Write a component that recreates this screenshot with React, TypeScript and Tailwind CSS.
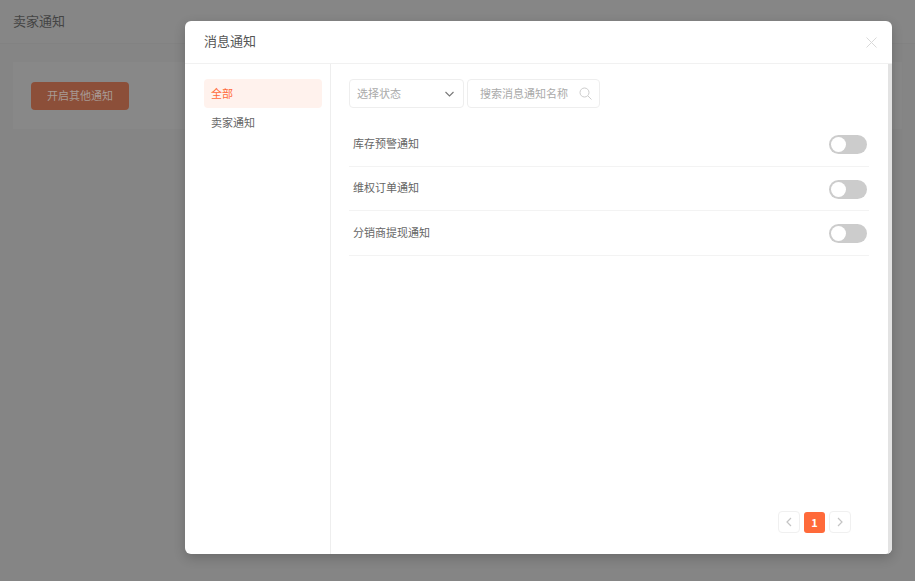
import React from "react";

const font = { fontFamily: '"Noto Sans CJK SC", "Noto Sans", sans-serif' };

function Toggle() {
  return (
    <div className="w-[38px] h-[19px] mt-[2px] rounded-full bg-[#cccccc] p-[2px] flex items-center">
      <div className="w-[15px] h-[15px] rounded-full bg-white" />
    </div>
  );
}

function Row({ label }: { label: string }) {
  return (
    <div className="h-[44.5px] flex items-center justify-between pl-[4px] pr-[2px] border-b border-[#f3f3f3] text-[11px] text-[#666666]">
      <span className="-mt-[1.5px]">{label}</span>
      <Toggle />
    </div>
  );
}

export default function App() {
  return (
    <div className="relative w-[915px] h-[581px] overflow-hidden bg-[#858585]" style={font}>
      <div className="h-[44px] bg-[#868686] border-b border-[#828282] flex items-center pl-[13px] pb-[2px] text-[13px] text-[#444444]">
        卖家通知
      </div>
      <div className="mx-[13px] mt-[18px] h-[67px] bg-[#888888] flex items-center pl-[18px]">
        <div className="w-[98px] h-[28px] rounded-[4px] bg-[#8c4f39] flex items-center justify-center text-[11px] text-[#a89b95]">
          开启其他通知
        </div>
      </div>

      <div className="absolute left-[185px] top-[21px] w-[707px] h-[533px] bg-white rounded-[6px] overflow-hidden flex flex-col shadow-[0_4px_12px_rgba(0,0,0,0.2)]">
        <div className="h-[43px] shrink-0 border-b border-[#f1f1f1] flex items-center justify-between pl-[19px] pr-[15px] pb-[2px] text-[13px] text-[#555555]">
          <span>消息通知</span>
          <svg width="11" height="11" viewBox="0 0 11 11" className="mt-[2px]" fill="none" stroke="#d9d9d9" strokeWidth="1">
            <path d="M0.5 0.5 L10.5 10.5 M10.5 0.5 L0.5 10.5" />
          </svg>
        </div>
        <div className="flex-1 flex min-h-0">
          <div className="w-[146px] shrink-0 border-r border-[#eeeeee] pt-[15px] pl-[19px] pr-[8px] text-[11px]">
            <div className="h-[29px] rounded-[4px] bg-[#fff2ed] text-[#ff6a3a] flex items-center pl-[7px]">全部</div>
            <div className="h-[29px] text-[#666666] flex items-center pl-[7px] mt-[1px] pb-[2px]">卖家通知</div>
          </div>
          <div className="flex-1 flex flex-col pt-[15px] pl-[18px] pr-[19px] pb-[21px] min-w-0">
            <div className="flex gap-[3px] text-[11px] text-[#aaaaaa]">
              <div className="w-[115px] h-[29px] border border-[#eeeeee] rounded-[4px] flex items-center justify-between pl-[7px] pr-[9px]">
                <span>选择状态</span>
                <svg width="9" height="6" viewBox="0 0 9 6" fill="none" stroke="#777777" strokeWidth="1.1">
                  <path d="M0.5 1 L4.5 5 L8.5 1" />
                </svg>
              </div>
              <div className="w-[133px] h-[29px] border border-[#eeeeee] rounded-[4px] flex items-center justify-between pl-[12px] pr-[7px]">
                <span>搜索消息通知名称</span>
                <svg width="13" height="13" viewBox="0 0 13 13" fill="none" stroke="#cccccc" strokeWidth="1">
                  <circle cx="5.5" cy="5.5" r="4.5" />
                  <path d="M9 9 L12.5 12.5" />
                </svg>
              </div>
            </div>
            <div className="mt-[14px]">
              <Row label="库存预警通知" />
              <Row label="维权订单通知" />
              <Row label="分销商提现通知" />
            </div>
            <div className="mt-auto flex justify-end items-center gap-[4px] pr-[18px]">
              <div className="w-[22px] h-[22px] border border-[#f0f0f0] rounded-[4px] flex items-center justify-center">
                <svg width="6" height="10" viewBox="0 0 6 10" fill="none" stroke="#c4c4c4" strokeWidth="1.2"><path d="M5 1 L1 5 L5 9" /></svg>
              </div>
              <div className="w-[21px] h-[21px] rounded-[3px] bg-[#ff6a3a] text-white text-[11px] font-bold flex items-center justify-center">1</div>
              <div className="w-[22px] h-[22px] border border-[#f0f0f0] rounded-[4px] flex items-center justify-center">
                <svg width="6" height="10" viewBox="0 0 6 10" fill="none" stroke="#c4c4c4" strokeWidth="1.2"><path d="M1 1 L5 5 L1 9" /></svg>
              </div>
            </div>
          </div>
          <div className="w-[4px] shrink-0 bg-[#e3e3e3]" />
        </div>
      </div>
    </div>
  );
}
